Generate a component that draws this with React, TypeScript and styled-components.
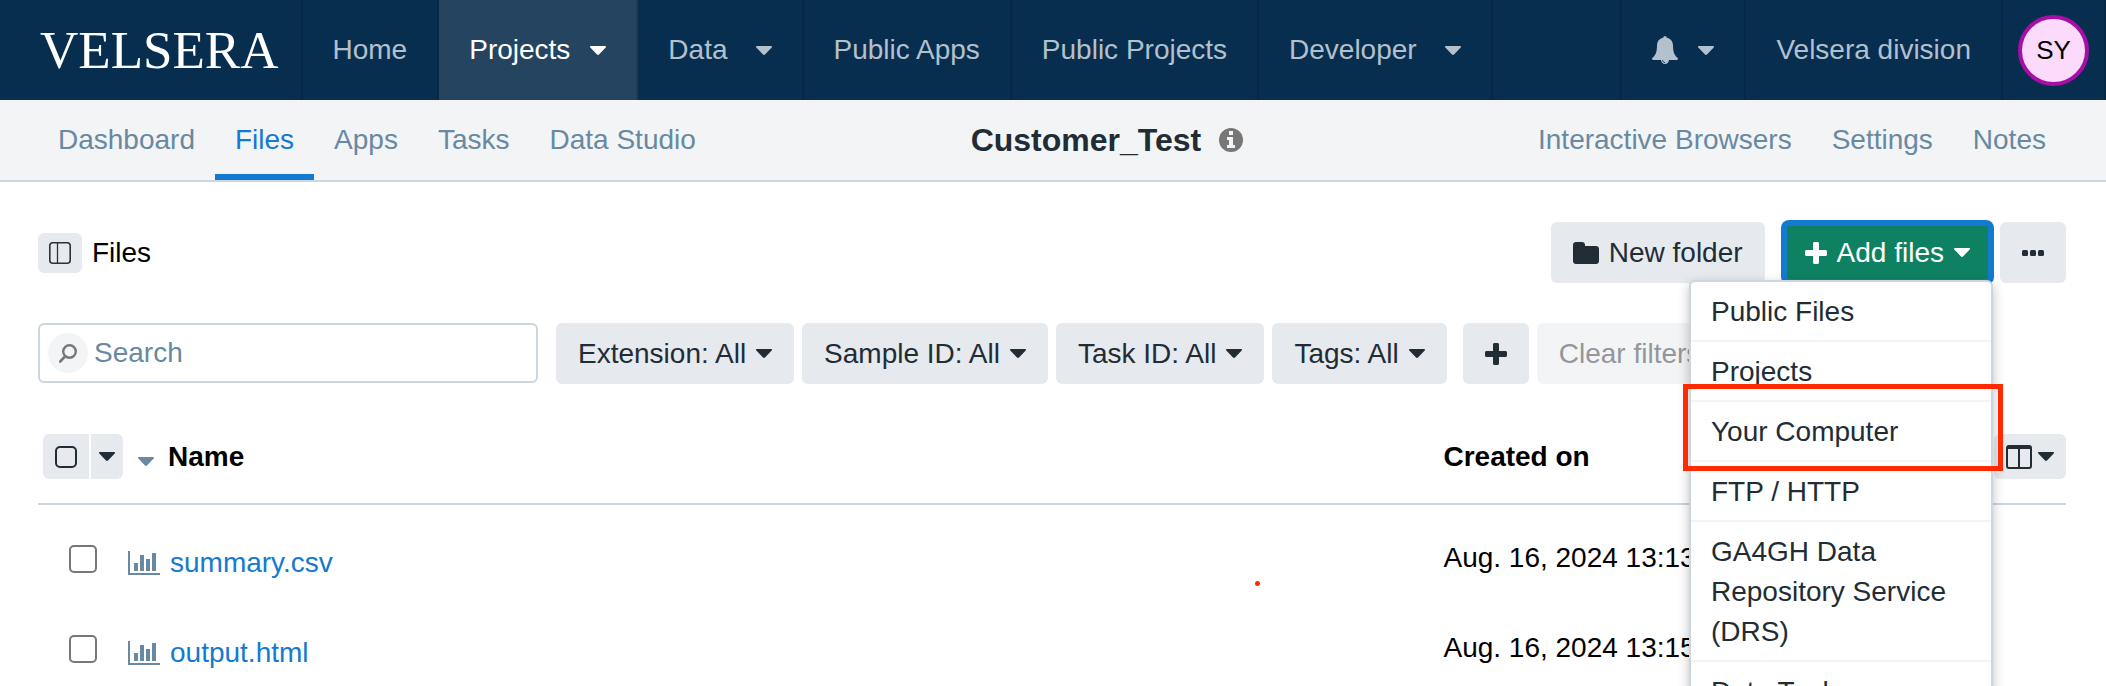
import React from "react";
import styled, { createGlobalStyle } from "styled-components";

const color = {
  navy: "#082e4f",
  navyActive: "#24445f",
  navText: "#b3c0cd",
  line: "#cbd6e0",
  pale: "#f3f4f6",
  button: "#e6e9ee",
  ink: "#212c35",
  slate: "#6889a1",
  blue: "#1479d0",
  green: "#0f8163",
  grey: "#777777",
};

const GlobalStyle = createGlobalStyle`
  html { scrollbar-width: none; }
  body {
    margin: 0;
    background: #fff;
    color: #000;
    font: 28px/40px "Liberation Sans", Arial, Helvetica, sans-serif;
  }
  *, *::before, *::after { box-sizing: border-box; }
  button, input { font: inherit; color: inherit; }
  svg { display: block; flex: none; }
`;

const Page = styled.div`
  min-height: 100vh;
  overflow: hidden;
`;

/* Top navigation */

const TopNav = styled.nav`
  display: flex;
  height: 100px;
  background: ${color.navy};
  color: ${color.navText};
`;

const Brand = styled.a`
  display: flex;
  align-items: center;
  padding: 0 22px 0 40px;
  border-right: 2px solid rgba(0, 0, 0, 0.12);
  color: #fff;
  font-family: "Liberation Serif", "Times New Roman", serif;
  font-size: 53px;
  text-decoration: none;
`;

const NavItem = styled.a<{ $active?: boolean; $gap?: number }>`
  display: flex;
  align-items: center;
  gap: ${(p) => p.$gap ?? 28}px;
  padding: 0 30px;
  border-right: 2px solid rgba(0, 0, 0, 0.12);
  background: ${(p) => (p.$active ? color.navyActive : "transparent")};
  color: ${(p) => (p.$active ? "#fff" : "inherit")};
  text-decoration: none;
  white-space: nowrap;
`;

const NavEnd = styled.div`
  display: flex;
  margin-left: auto;
  border-left: 2px solid rgba(0, 0, 0, 0.12);
`;

const AvatarCell = styled.div`
  display: flex;
  align-items: center;
  padding: 0 15px;
  border-right: 2px solid rgba(0, 0, 0, 0.12);
`;

const Avatar = styled.button`
  width: 71px;
  height: 71px;
  padding: 0;
  border: 4px solid #a50fa5;
  border-radius: 50%;
  background: #fbdafb;
  color: #000;
  font-size: 26px;
`;

/* Project bar */

const ProjectBar = styled.div`
  display: flex;
  justify-content: space-between;
  height: 82px;
  padding: 0 40px 0 38px;
  border-bottom: 2px solid ${color.line};
  background: ${color.pale};
`;

const Tabs = styled.nav`
  display: flex;
`;

const Tab = styled.a<{ $active?: boolean }>`
  display: flex;
  align-items: center;
  padding: 0 20px;
  color: ${(p) => (p.$active ? color.blue : color.slate)};
  box-shadow: ${(p) => (p.$active ? `inset 0 -6px ${color.blue}` : "none")};
  text-decoration: none;
  white-space: nowrap;
`;

const ProjectTitle = styled.div`
  display: flex;
  align-items: center;
  gap: 18px;
  padding-right: 20px;
`;

const Title = styled.h1`
  margin: 0;
  color: ${color.ink};
  font-size: 32px;
  line-height: 40px;
`;

/* Content */

const Main = styled.main`
  padding: 40px 40px 0 38px;
`;

const Toolbar = styled.div`
  display: flex;
  align-items: center;
  justify-content: space-between;
  margin-bottom: 40px;
`;

const Group = styled.div<{ $gap: number }>`
  display: flex;
  align-items: center;
  gap: ${(p) => p.$gap}px;
`;

const PanelToggle = styled.button`
  display: flex;
  align-items: center;
  justify-content: center;
  width: 44px;
  height: 40px;
  padding: 0;
  border: 0;
  border-radius: 6px;
  background: ${color.button};
`;

const Button = styled.button`
  display: flex;
  align-items: center;
  gap: 10px;
  height: 61px;
  padding: 0 22px;
  border: 0;
  border-radius: 6px;
  background: ${color.button};
  color: ${color.ink};
  white-space: nowrap;

  &:disabled {
    background: ${color.pale};
    color: #93969b;
  }
`;

const PrimaryButton = styled(Button)`
  padding: 0 18px;
  border: 4px solid ${color.blue};
  box-shadow: 0 0 0 2px ${color.blue};
  background: ${color.green};
  color: #fff;
`;

const Dropdown = styled.div`
  position: relative;
  margin: 0 8px 0 18px;
`;

const Menu = styled.ul`
  position: absolute;
  z-index: 2;
  top: 58px;
  right: -1px;
  width: 304px;
  margin: 0;
  padding: 0;
  border: 2px solid ${color.line};
  border-radius: 6px;
  background: #fff;
  box-shadow: 0 4px 12px rgba(0, 0, 0, 0.25);
  list-style: none;
`;

const MenuItem = styled.li`
  position: relative;
  border-bottom: 2px solid ${color.pale};
`;

const MenuLink = styled.a`
  display: block;
  padding: 10px 20px 8px;
  color: ${color.ink};
  text-decoration: none;
`;

const Highlight = styled.span`
  position: absolute;
  z-index: 3;
  inset: -18px -12px -11px -8px;
  border: 5px solid #ff2a00;
  pointer-events: none;
`;

const Filters = styled.div`
  display: flex;
  align-items: flex-start;
  gap: 8px;
`;

const SearchBox = styled.label`
  display: flex;
  align-items: center;
  gap: 6px;
  width: 500px;
  height: 60px;
  margin-right: 10px;
  padding: 0 8px;
  border: 2px solid ${color.line};
  border-radius: 6px;
`;

const SearchIcon = styled.span`
  display: flex;
  flex: none;
  align-items: center;
  justify-content: center;
  width: 40px;
  height: 40px;
  border-radius: 50%;
  background: ${color.pale};
`;

const SearchInput = styled.input`
  flex: 1;
  min-width: 0;
  padding: 0;
  border: 0;
  outline: 0;
  background: transparent;

  &::placeholder {
    color: ${color.slate};
    opacity: 1;
  }
`;

const AddFilter = styled(Button)`
  margin-left: 8px;
`;

/* Files table */

const Table = styled.table`
  width: 100%;
  margin-top: 26px;
  border-collapse: separate;
  border-spacing: 0;
  table-layout: fixed;
`;

const HeadCell = styled.th<{ $width?: string; $indent?: number }>`
  width: ${(p) => p.$width ?? "auto"};
  height: 95px;
  padding: 0 0 0 ${(p) => p.$indent ?? 0}px;
  border-bottom: 2px solid ${color.line};
  text-align: left;
  white-space: nowrap;
`;

const Cell = styled.td<{ $top: number; $indent?: number }>`
  height: 90px;
  padding: ${(p) => p.$top}px 0 0 ${(p) => p.$indent ?? 0}px;
  vertical-align: top;
  white-space: nowrap;
`;

const SplitButton = styled.div`
  display: flex;
  gap: 2px;
  width: 80px;
  height: 45px;
  overflow: hidden;
  border-radius: 6px;
`;

const SplitPart = styled.div`
  display: flex;
  align-items: center;
  padding: 0 12px;
  background: ${color.button};
`;

const SplitToggle = styled.button`
  display: flex;
  align-items: center;
  padding: 0 8px;
  border: 0;
  background: ${color.button};
  color: ${color.ink};
`;

const Checkbox = styled.input<{ $small?: boolean }>`
  appearance: none;
  display: block;
  width: ${(p) => (p.$small ? 22 : 28)}px;
  height: ${(p) => (p.$small ? 22 : 28)}px;
  margin: 0;
  border: 2px solid ${(p) => (p.$small ? color.ink : color.grey)};
  border-radius: 5px;
  background: ${(p) => (p.$small ? "transparent" : "#fff")};
`;

const SortLabel = styled.span`
  display: flex;
  align-items: baseline;
  gap: 14px;
`;

const ColumnsButton = styled(Button)`
  gap: 6px;
  height: 45px;
  margin-left: auto;
  padding: 0 12px;
`;

const FileName = styled.div`
  display: flex;
  align-items: center;
  gap: 10px;
`;

const FileLink = styled.a`
  color: ${color.blue};
  text-decoration: none;
`;

const Marker = styled.span`
  position: absolute;
  left: 1255px;
  top: 581px;
  width: 5px;
  height: 5px;
  border-radius: 50%;
  background: #ff2a00;
`;

/* Icons */

const Caret = ({ fill = "currentColor" }: { fill?: string }) => (
  <svg width="16" height="9" viewBox="0 0 16 9" fill={fill} aria-hidden="true">
    <path d="M.8 0h14.4c.8 0 1.1.9.5 1.5L9 8.5c-.6.6-1.4.6-2 0L.3 1.5C-.3.9 0 0 .8 0z" />
  </svg>
);

const Plus = () => (
  <svg width="22" height="22" viewBox="0 0 22 22" fill="currentColor" aria-hidden="true">
    <path d="M9.5 0h3c.8 0 1.5.7 1.5 1.5V8h6.5c.8 0 1.5.7 1.5 1.5v3c0 .8-.7 1.5-1.5 1.5H14v6.5c0 .8-.7 1.5-1.5 1.5h-3c-.8 0-1.500-.7-1.500-1.500V14H1.500C.7 14 0 13.300 0 12.500v-3C0 8.700.7 8 1.500 8H8V1.500C8 .7 8.700 0 9.500 0z" />
  </svg>
);

const Folder = () => (
  <svg width="26" height="22" viewBox="0 0 26 22" fill="currentColor" aria-hidden="true">
    <path d="M3 0h6c1.700 0 3 1.300 3 3v1h11c1.700 0 3 1.300 3 3v12c0 1.700-1.300 3-3 3H3c-1.700 0-3-1.300-3-3V3c0-1.700 1.300-3 3-3z" />
  </svg>
);

const Dots = () => (
  <svg width="22" height="6" viewBox="0 0 22 6" fill="currentColor" aria-hidden="true">
    <rect width="6" height="6" rx="1.500" />
    <rect x="8" width="6" height="6" rx="1.500" />
    <rect x="16" width="6" height="6" rx="1.500" />
  </svg>
);

const Bell = () => (
  <svg width="26" height="28" viewBox="0 0 26 28" aria-hidden="true">
    <path
      fill="currentColor"
      d="M13 0c1 0 1.700.7 1.700 1.800C18.600 2.500 21 5.500 21 9.500c0 6.500 1.500 10 4.500 12.300.9.8.5 2.200-.7 2.200H17c0 2.300-1.700 4-4 4s-4-1.700-4-4H1.200C0 24-.4 22.600.5 21.800 3.500 19.500 5 16 5 9.500c0-4 2.400-7 6.300-7.700C11.300.7 12 0 13 0z"
    />
    <path d="M10.600 24.300c.1 1.300 1 2.200 2.400 2.300" fill="none" stroke={color.navy} strokeWidth="0.900" />
  </svg>
);

const Info = () => (
  <svg width="24" height="24" viewBox="0 0 24 24" aria-hidden="true">
    <circle cx="12" cy="12" r="12" fill={color.grey} />
    <path fill={color.pale} d="M10 3h4v4h-4zM8 9h6v8h2v3H8v-3h2v-5H8z" />
  </svg>
);

const Panel = () => (
  <svg width="22" height="22" viewBox="0 0 22 22" fill="none" stroke="#2d3338" aria-hidden="true">
    <rect x="0.800" y="0.800" width="20.400" height="20.400" rx="3" strokeWidth="1.600" />
    <path d="M8.500 1v20" strokeWidth="1.300" />
  </svg>
);

const Magnifier = () => (
  <svg width="18" height="19" viewBox="0 0 18 19" fill="none" stroke={color.grey} aria-hidden="true">
    <circle cx="10.500" cy="7.500" r="6.300" strokeWidth="2.400" />
    <path d="M6 12.500L1.200 17.500" strokeWidth="2.600" strokeLinecap="round" />
  </svg>
);

const Columns = () => (
  <svg width="26" height="24" viewBox="0 0 26 24" fill="none" stroke="currentColor" aria-hidden="true">
    <rect x="1" y="1" width="24" height="22" rx="2" strokeWidth="2" />
    <path d="M1 2.500h24" strokeWidth="3" />
    <path d="M13 3v20" strokeWidth="2" />
  </svg>
);

const Chart = () => (
  <svg width="32" height="24" viewBox="0 0 32 24" fill={color.slate} aria-hidden="true">
    <path d="M0 0h2v22h30v2H0zM6 12h4v8H6zM12 4h4v16h-4zM18 8h4v12h-4zM24 2h4v18h-4z" />
  </svg>
);

const filters = ["Extension: All", "Sample ID: All", "Task ID: All", "Tags: All"];

const menu = [
  "Public Files",
  "Projects",
  "Your Computer",
  "FTP / HTTP",
  "GA4GH Data Repository Service (DRS)",
  "Data Tools",
];

const files = [
  { name: "summary.csv", created: "Aug. 16, 2024 13:13" },
  { name: "output.html", created: "Aug. 16, 2024 13:15" },
];

export default function App() {
  return (
    <Page>
      <GlobalStyle />
      <TopNav aria-label="Main">
        <Brand href="#">VELSERA</Brand>
        <NavItem href="#">Home</NavItem>
        <NavItem href="#" $active $gap={20}>
          Projects <Caret />
        </NavItem>
        <NavItem href="#">
          Data <Caret />
        </NavItem>
        <NavItem href="#">Public Apps</NavItem>
        <NavItem href="#">Public Projects</NavItem>
        <NavItem href="#">
          Developer <Caret />
        </NavItem>
        <NavEnd>
          <NavItem href="#" $gap={20} aria-label="Notifications">
            <Bell /> <Caret />
          </NavItem>
          <NavItem href="#">Velsera division</NavItem>
          <AvatarCell>
            <Avatar type="button">SY</Avatar>
          </AvatarCell>
        </NavEnd>
      </TopNav>

      <ProjectBar>
        <Tabs aria-label="Project">
          <Tab href="#">Dashboard</Tab>
          <Tab href="#" $active aria-current="page">
            Files
          </Tab>
          <Tab href="#">Apps</Tab>
          <Tab href="#">Tasks</Tab>
          <Tab href="#">Data Studio</Tab>
        </Tabs>
        <ProjectTitle>
          <Title>Customer_Test</Title>
          <Info />
        </ProjectTitle>
        <Tabs aria-label="Project tools">
          <Tab href="#">Interactive Browsers</Tab>
          <Tab href="#">Settings</Tab>
          <Tab href="#">Notes</Tab>
        </Tabs>
      </ProjectBar>

      <Main>
        <Toolbar>
          <Group $gap={10}>
            <PanelToggle type="button" aria-label="Toggle folder panel">
              <Panel />
            </PanelToggle>
            <span>Files</span>
          </Group>
          <Group $gap={0}>
            <Button type="button">
              <Folder /> New folder
            </Button>
            <Dropdown>
              <PrimaryButton type="button" aria-haspopup="menu" aria-expanded="true">
                <Plus /> Add files <Caret />
              </PrimaryButton>
              <Menu>
                {menu.map((label) => (
                  <MenuItem key={label}>
                    <MenuLink href="#">{label}</MenuLink>
                    {label === "Your Computer" && <Highlight />}
                  </MenuItem>
                ))}
              </Menu>
            </Dropdown>
            <Button type="button" aria-label="More actions">
              <Dots />
            </Button>
          </Group>
        </Toolbar>

        <Filters>
          <SearchBox>
            <SearchIcon>
              <Magnifier />
            </SearchIcon>
            <SearchInput type="text" placeholder="Search" aria-label="Search" />
          </SearchBox>
          {filters.map((label) => (
            <Button key={label} type="button" aria-haspopup="listbox">
              {label} <Caret />
            </Button>
          ))}
          <AddFilter type="button" aria-label="Add filter">
            <Plus />
          </AddFilter>
          <Button type="button" disabled>
            Clear filters
          </Button>
        </Filters>

        <Table>
          <thead>
            <tr>
              <HeadCell $width="90px" $indent={5}>
                <SplitButton>
                  <SplitPart>
                    <Checkbox type="checkbox" $small aria-label="Select all files" />
                  </SplitPart>
                  <SplitToggle type="button" aria-label="Selection options">
                    <Caret />
                  </SplitToggle>
                </SplitButton>
              </HeadCell>
              <HeadCell $indent={10}>
                <SortLabel>
                  <Caret fill={color.slate} /> Name
                </SortLabel>
              </HeadCell>
              <HeadCell $width="27%" $indent={1}>
                Created on
              </HeadCell>
              <HeadCell $width="76px">
                <ColumnsButton type="button" aria-label="Columns">
                  <Columns /> <Caret />
                </ColumnsButton>
              </HeadCell>
            </tr>
          </thead>
          <tbody>
            {files.map((file) => (
              <tr key={file.name}>
                <Cell $top={40} $indent={31}>
                  <Checkbox type="checkbox" aria-label={`Select ${file.name}`} />
                </Cell>
                <Cell $top={38}>
                  <FileName>
                    <Chart />
                    <FileLink href="#">{file.name}</FileLink>
                  </FileName>
                </Cell>
                <Cell $top={33} $indent={1}>
                  {file.created}
                </Cell>
                <Cell $top={33} />
              </tr>
            ))}
          </tbody>
        </Table>
      </Main>
      <Marker />
    </Page>
  );
}
